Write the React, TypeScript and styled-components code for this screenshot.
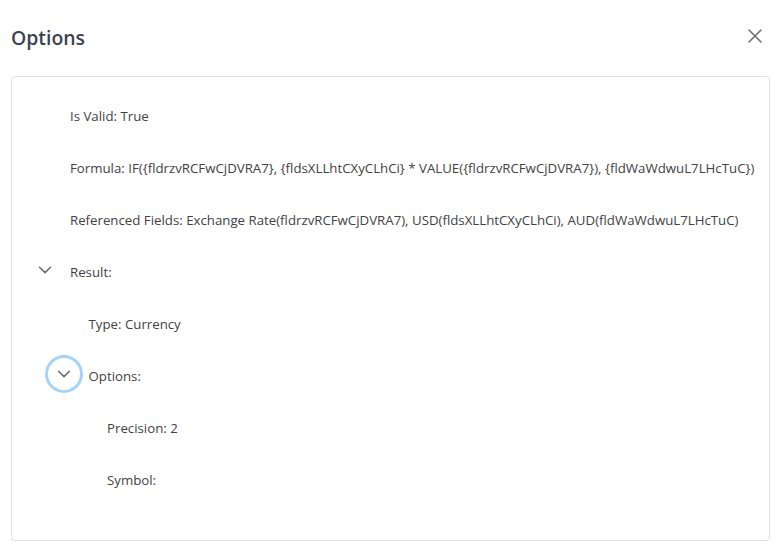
import React from "react";
import styled, { createGlobalStyle } from "styled-components";

const Global = createGlobalStyle`
  html, body { margin: 0; padding: 0; background: #fff; }
  body { font-family: "Open Sans", "Noto Sans", sans-serif; }
`;

const Dialog = styled.div`
  width: 782px;
  height: 542px;
  box-sizing: border-box;
  padding: 0 12px 1px 11px;
  display: flex;
  flex-direction: column;
`;

const Header = styled.div`
  height: 76px;
  display: flex;
  align-items: center;
  justify-content: space-between;
  box-sizing: border-box;
`;

const Title = styled.h2`
  margin: 0;
  margin-top: -1px;
  font-size: 19.4px;
  font-weight: 600;
  color: #3b4351;
`;

const CloseButton = styled.button`
  border: none;
  background: none;
  padding: 0;
  width: 24px;
  height: 24px;
  display: flex;
  align-items: center;
  justify-content: center;
  margin-right: 3px;
  margin-top: -4px;
  cursor: pointer;
`;

const Panel = styled.div`
  flex: 1;
  border: 1px solid #e1e0e6;
  border-radius: 4px;
  padding: 13px 0 0 0;
  box-sizing: border-box;
`;

const Row = styled.div<{ $level: number }>`
  height: 52px;
  display: flex;
  align-items: center;
  padding-left: ${(p) => 15 + p.$level * 18.5}px;
  gap: 7px;
`;

const ToggleSlot = styled.div`
  width: 36px;
  height: 36px;
  flex: none;
  display: flex;
  align-items: center;
  justify-content: center;
  margin-top: -4px;
`;

const Toggle = styled.button<{ $focused?: boolean }>`
  width: 38px;
  height: 38px;
  flex: none;
  border-radius: 50%;
  border: none;
  padding: 0;
  background: transparent;
  display: flex;
  align-items: center;
  justify-content: center;
  box-sizing: border-box;
  box-shadow: ${(p) => (p.$focused ? "inset 0 0 0 3px #a9d3f6" : "none")};
`;

const Label = styled.span`
  font-size: 13.25px;
  color: #424242;
  white-space: nowrap;
`;

const Chevron = () => (
  <svg width="14" height="8" viewBox="0 0 14 8" fill="none">
    <path d="M1.5 1.2 L7 6.6 L12.5 1.2" stroke="#666b70" strokeWidth="1.5" strokeLinecap="round" strokeLinejoin="round" />
  </svg>
);

type Item = { level: number; text: string; toggle?: "plain" | "focused" };

const items: Item[] = [
  { level: 0, text: "Is Valid: True" },
  {
    level: 0,
    text: "Formula: IF({fldrzvRCFwCjDVRA7}, {fldsXLLhtCXyCLhCi} * VALUE({fldrzvRCFwCjDVRA7}), {fldWaWdwuL7LHcTuC})",
  },
  {
    level: 0,
    text: "Referenced Fields: Exchange Rate(fldrzvRCFwCjDVRA7), USD(fldsXLLhtCXyCLhCi), AUD(fldWaWdwuL7LHcTuC)",
  },
  { level: 0, text: "Result:", toggle: "plain" },
  { level: 1, text: "Type: Currency" },
  { level: 1, text: "Options:", toggle: "focused" },
  { level: 2, text: "Precision: 2" },
  { level: 2, text: "Symbol:" },
];

export default function App() {
  return (
    <>
      <Global />
      <Dialog>
        <Header>
          <Title>Options</Title>
          <CloseButton aria-label="Close">
            <svg width="14" height="14" viewBox="0 0 14 14">
              <path d="M1 1 L13 13 M13 1 L1 13" stroke="#6c7075" strokeWidth="1.6" strokeLinecap="round" />
            </svg>
          </CloseButton>
        </Header>
        <Panel>
          {items.map((it, i) => (
            <Row key={i} $level={it.level}>
              <ToggleSlot>
                {it.toggle && (
                  <Toggle $focused={it.toggle === "focused"}>
                    <Chevron />
                  </Toggle>
                )}
              </ToggleSlot>
              <Label>{it.text}</Label>
            </Row>
          ))}
        </Panel>
      </Dialog>
    </>
  );
}
